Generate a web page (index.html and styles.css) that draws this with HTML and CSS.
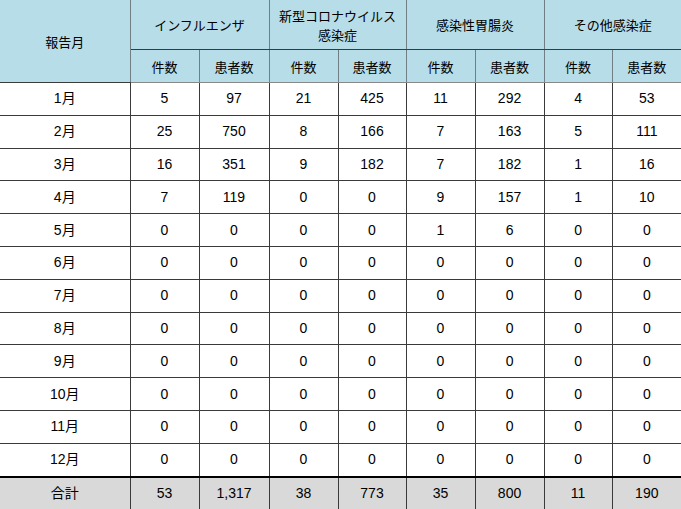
FILE: index.html
```html
<!DOCTYPE html>
<html lang="ja">
<head>
<meta charset="utf-8">
<title>感染症報告</title>
<link rel="stylesheet" href="styles.css">
</head>
<body>
<table class="report">
  <colgroup>
    <col class="c-label">
    <col class="c-a"><col class="c-b">
    <col class="c-a"><col class="c-c">
    <col class="c-d"><col class="c-a">
    <col class="c-c"><col class="c-a">
  </colgroup>
  <thead>
    <tr class="h1">
      <th rowspan="2">報告月</th>
      <th colspan="2">インフルエンザ</th>
      <th colspan="2">新型コロナウイルス<br>感染症</th>
      <th colspan="2">感染性胃腸炎</th>
      <th colspan="2">その他感染症</th>
    </tr>
    <tr class="h2">
      <th>件数</th><th>患者数</th>
      <th>件数</th><th>患者数</th>
      <th>件数</th><th>患者数</th>
      <th>件数</th><th>患者数</th>
    </tr>
  </thead>
  <tbody>
    <tr><td>1月</td><td>5</td><td>97</td><td>21</td><td>425</td><td>11</td><td>292</td><td>4</td><td>53</td></tr>
    <tr><td>2月</td><td>25</td><td>750</td><td>8</td><td>166</td><td>7</td><td>163</td><td>5</td><td>111</td></tr>
    <tr><td>3月</td><td>16</td><td>351</td><td>9</td><td>182</td><td>7</td><td>182</td><td>1</td><td>16</td></tr>
    <tr><td>4月</td><td>7</td><td>119</td><td>0</td><td>0</td><td>9</td><td>157</td><td>1</td><td>10</td></tr>
    <tr><td>5月</td><td>0</td><td>0</td><td>0</td><td>0</td><td>1</td><td>6</td><td>0</td><td>0</td></tr>
    <tr><td>6月</td><td>0</td><td>0</td><td>0</td><td>0</td><td>0</td><td>0</td><td>0</td><td>0</td></tr>
    <tr><td>7月</td><td>0</td><td>0</td><td>0</td><td>0</td><td>0</td><td>0</td><td>0</td><td>0</td></tr>
    <tr><td>8月</td><td>0</td><td>0</td><td>0</td><td>0</td><td>0</td><td>0</td><td>0</td><td>0</td></tr>
    <tr><td>9月</td><td>0</td><td>0</td><td>0</td><td>0</td><td>0</td><td>0</td><td>0</td><td>0</td></tr>
    <tr><td>10月</td><td>0</td><td>0</td><td>0</td><td>0</td><td>0</td><td>0</td><td>0</td><td>0</td></tr>
    <tr><td>11月</td><td>0</td><td>0</td><td>0</td><td>0</td><td>0</td><td>0</td><td>0</td><td>0</td></tr>
    <tr><td>12月</td><td>0</td><td>0</td><td>0</td><td>0</td><td>0</td><td>0</td><td>0</td><td>0</td></tr>
  </tbody>
  <tfoot>
    <tr class="total"><td>合計</td><td>53</td><td>1,317</td><td>38</td><td>773</td><td>35</td><td>800</td><td>11</td><td>190</td></tr>
  </tfoot>
</table>
</body>
</html>
```

FILE: styles.css
```css
html, body {
  margin: 0;
  padding: 0;
  background: #ffffff;
}

body {
  font-family: "Liberation Sans", "Noto Sans CJK JP", sans-serif;
  font-size: 14px;
  color: #000;
}

.report {
  border-collapse: collapse;
  table-layout: fixed;
  width: 681px;
  border-style: hidden;
}

.c-label { width: 130px; }
.c-a { width: 69px; }
.c-b { width: 70px; }
.c-c { width: 68px; }
.c-d { width: 69px; }

.report th,
.report td {
  border: 1px solid #3a3a3a;
  padding: 0;
  text-align: center;
  vertical-align: middle;
  line-height: 19px;
}

.report th {
  background: #b7dde8;
  font-weight: normal;
  font-family: "Noto Sans CJK JP", sans-serif;
  font-size: 13px;
  color: #000;
  border-left-color: #6f7f84;
  border-right-color: #6f7f84;
}

.report thead tr.h1 th {
  height: 49px;
}

.report thead tr.h2 th {
  height: 32px;
  border-bottom-color: #888;
}

.report tbody td {
  height: 31.8px;
}

.report tfoot td {
  background: #d9d9d9;
  border-top: 2px solid #000;
  height: 31px;
}
```
